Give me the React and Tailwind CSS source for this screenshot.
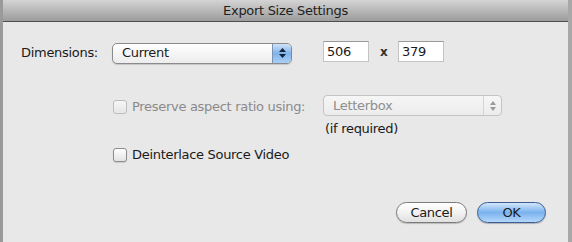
export default function App() {
  const font = { fontFamily: '"DejaVu Sans", "Lucida Grande", sans-serif' };
  return (
    <div className="w-[572px] h-[242px] bg-[#e8e8e8] flex flex-col overflow-hidden text-[13px] tracking-[-0.3px] text-[#1a1a1a] border-l-[3px] border-r-[4px] border-l-[#9a9a9a] border-r-[#a8a8a8]" style={font}>
      <div className="h-[22px] shrink-0 bg-gradient-to-b from-[#d4d4d4] via-[#b8b8b8] to-[#9c9c9c] border-b border-b-[#4e4e4e] flex items-center justify-center text-[13px] text-[#1e1e1e]">
        Export Size Settings
      </div>
      <div className="flex-1 flex flex-col relative">
        {/* Row 1 */}
        <div className="flex items-center mt-[20px] h-[22px]">
          <span className="ml-[18px] w-[91px]">Dimensions:</span>
          <div className="w-[180px] h-[21px] rounded-[5px] border border-[#8a8a8a] bg-gradient-to-b from-white to-[#ececec] flex items-center shadow-[0_1px_1px_rgba(0,0,0,0.15)] overflow-hidden">
            <span className="flex-1 pl-[9px]">Current</span>
            <div className="w-[19px] h-full bg-gradient-to-b from-[#cfe3f8] via-[#7fb2ea] to-[#a9d0f5] border-l border-l-[#7b94b4] flex flex-col items-center justify-center gap-[2px]">
              <svg width="7" height="4" viewBox="0 0 7 4"><path d="M0 4 L3.5 0 L7 4 Z" fill="#10243c" /></svg>
              <svg width="7" height="4" viewBox="0 0 7 4"><path d="M0 0 L3.5 4 L7 0 Z" fill="#10243c" /></svg>
            </div>
          </div>
          <div className="ml-[31px] w-[46px] h-[21px] bg-white border border-[#c4c4c4] border-t-[#9a9a9a] flex items-center pl-[3px] -mt-[3px]">506</div>
          <span className="ml-[11px] w-[18px] text-[12px] font-bold text-[#333] -mt-[3px]">x</span>
          <div className="w-[46px] h-[21px] bg-white border border-[#c4c4c4] border-t-[#9a9a9a] flex items-center pl-[3px] -mt-[3px]">379</div>
        </div>
        {/* Row 2 */}
        <div className="flex items-center mt-[31px] h-[21px]">
          <div className="ml-[110px] w-[14px] h-[14px] rounded-[3px] border border-[#bdbdbd] bg-gradient-to-b from-[#f6f6f6] to-[#e6e6e6] mt-[2px]" />
          <span className="ml-[5px] w-[191px] text-[#8a8a8a] mt-[2px]">Preserve aspect ratio using:</span>
          <div className="w-[179px] h-[21px] rounded-[4px] border border-[#c4c4c4] bg-gradient-to-b from-[#f6f6f6] to-[#ececec] flex items-center overflow-hidden">
            <span className="flex-1 pl-[9px] text-[#8e8e8e]">Letterbox</span>
            <div className="w-[18px] h-full border-l border-l-[#d4d4d4] flex flex-col items-center justify-center gap-[2px]">
              <svg width="6" height="4" viewBox="0 0 6 4"><path d="M0 4 L3 0 L6 4 Z" fill="#9a9a9a" /></svg>
              <svg width="6" height="4" viewBox="0 0 6 4"><path d="M0 0 L3 4 L6 0 Z" fill="#9a9a9a" /></svg>
            </div>
          </div>
        </div>
        <div className="ml-[322px] mt-[4px] h-[17px] flex items-center">(if required)</div>
        {/* Row 3 */}
        <div className="flex items-center mt-[9px] h-[18px]">
          <div className="ml-[110px] w-[14px] h-[14px] rounded-[3px] border border-[#8c8c8c] bg-gradient-to-b from-white to-[#e4e4e4] shadow-[0_1px_1px_rgba(0,0,0,0.12)]" />
          <span className="ml-[5px]">Deinterlace Source Video</span>
        </div>
        {/* Buttons */}
        <div className="flex items-center mt-[38px] h-[21px]">
          <div className="ml-[393px] w-[71px] h-[21px] rounded-full border border-[#7b7b7b] bg-gradient-to-b from-white via-[#f2f2f2] to-[#e0e0e0] flex items-center justify-center shadow-[0_1px_1px_rgba(0,0,0,0.2)]">Cancel</div>
          <div className="ml-[10px] w-[69px] h-[21px] rounded-full border border-[#3d5d95] bg-gradient-to-b from-[#d2e6fa] via-[#7ab2ee] to-[#b4d8fa] flex items-center justify-center shadow-[0_1px_1px_rgba(0,0,0,0.25)]">OK</div>
        </div>
      </div>
    </div>
  );
}
